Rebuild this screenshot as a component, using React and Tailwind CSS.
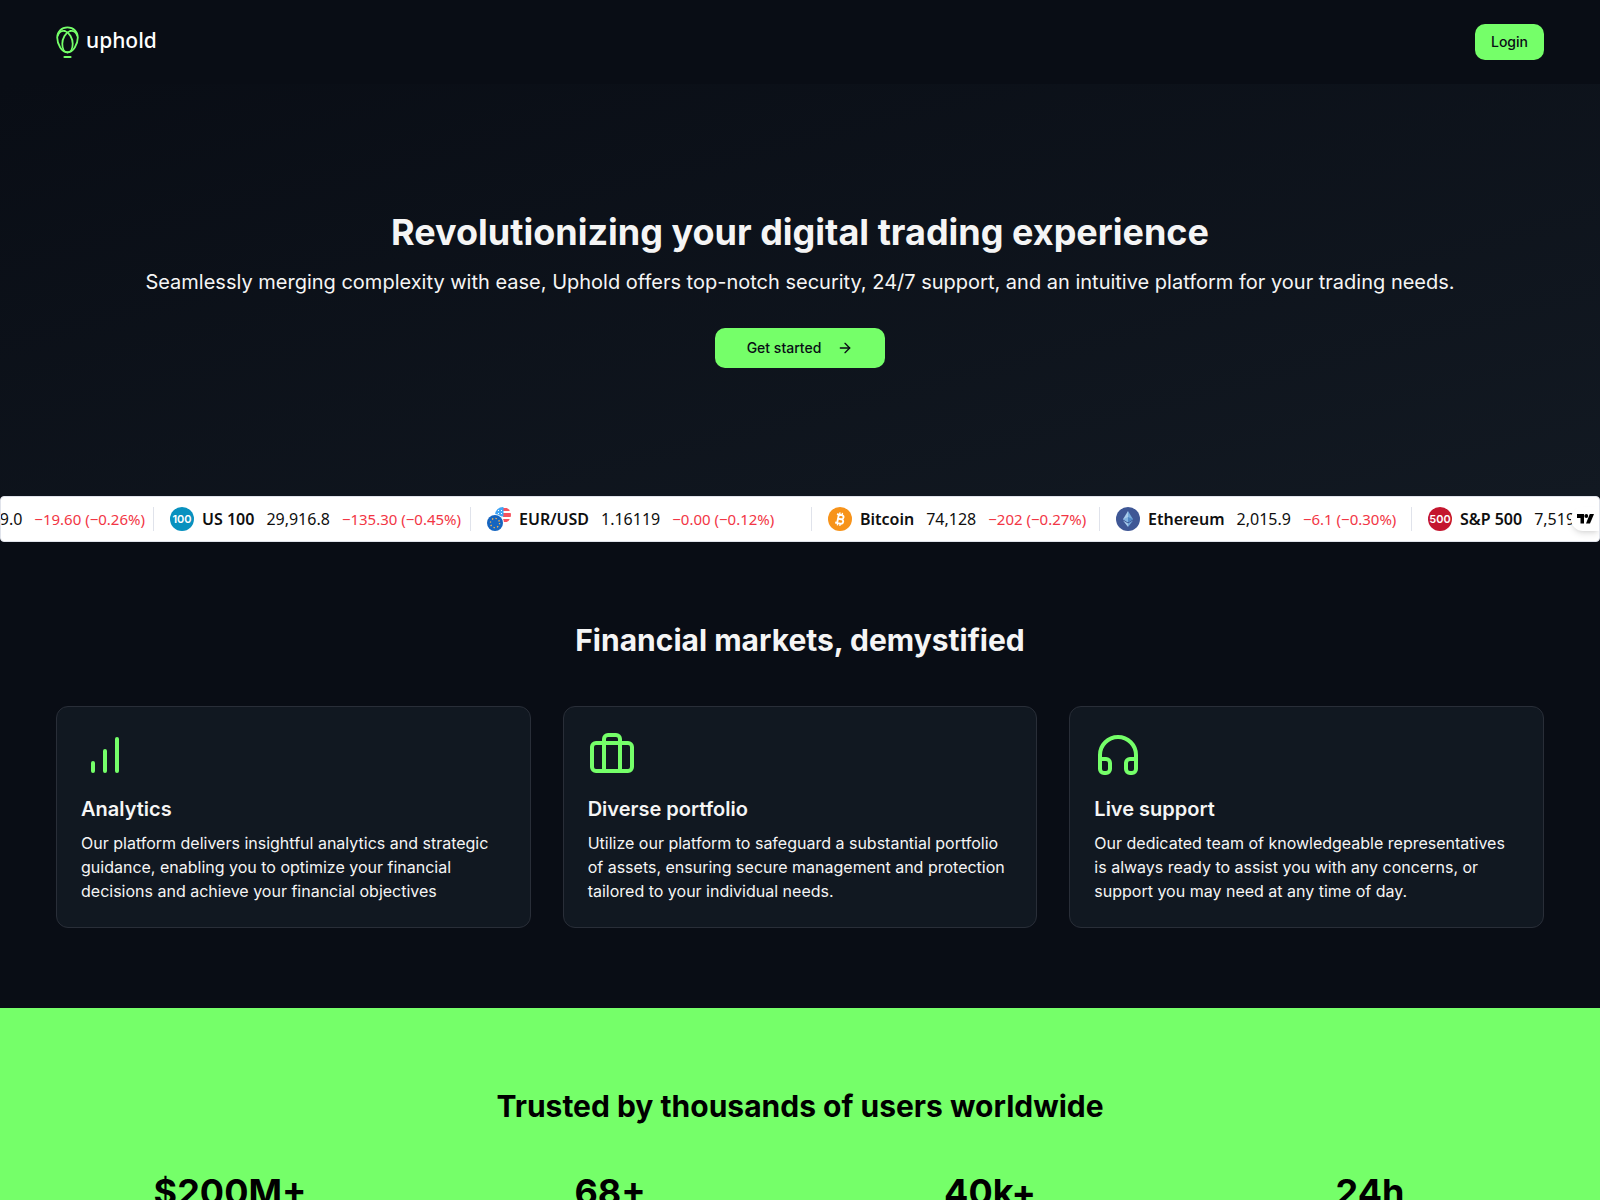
import { ArrowRight, Briefcase, Headphones } from "lucide-react";

function BalloonIcon() {
  return (
    <svg width="23" height="33" viewBox="0 0 23 33" fill="none" stroke="#75ff69" strokeWidth="1.8" strokeLinecap="round" aria-hidden="true">
      <path d="M11.500 1.300C5.300 1.300 1.200 5.800 1.200 11.600c0 6.400 4.600 14.800 10.300 14.800s10.300-8.400 10.300-14.800C21.800 5.800 17.700 1.300 11.500 1.300Z" />
      <path d="M1.800 9.500C3 6.200 6 4.300 9 5c4.500 1.500 7.700 7.500 7.700 12.700 0 4.900-2 8.700-5.200 8.700" />
      <path d="M21.200 9.500C20 6.200 17 4.300 14 5c-4.500 1.500-7.700 7.500-7.700 12.700 0 4.900 2 8.700 5.200 8.700" />
      <path d="M8.500 31h6" strokeWidth="2.200" />
    </svg>
  );
}

function BarsIcon() {
  return (
    <svg width="48" height="48" viewBox="0 0 24 24" fill="none" stroke="currentColor" strokeWidth="2" strokeLinecap="round" aria-hidden="true">
      <path d="M12 20V10M18 20V4M6 20v-4" />
    </svg>
  );
}

function NumberBadge({ value, color }) {
  return (
    <svg width="24" height="24" viewBox="0 0 24 24" className="shrink-0" aria-hidden="true">
      <circle cx="12" cy="12" r="12" fill={color} />
      <text x="12" y="16" textAnchor="middle" fontSize="11" fontWeight="600" fill="#fff" fontFamily="Inter, sans-serif">{value}</text>
    </svg>
  );
}

function EurUsdIcon() {
  return (
    <svg width="24" height="24" viewBox="0 0 24 24" className="shrink-0" aria-hidden="true">
      <defs>
        <clipPath id="usd"><circle cx="16" cy="8" r="8" /></clipPath>
      </defs>
      <g clipPath="url(#usd)">
        <rect x="8" width="16" height="16" fill="#fff" />
        <path d="M16 1h8v3h-8zM16 6h8v4h-8zM8 12h16v3H8z" fill="#f7525f" />
        <rect x="8" width="8.500" height="9.500" fill="#42a5f5" />
        <path d="M11 3h1v1h-1zM14 3h1v1h-1zM11 6h1v1h-1zM14 6h1v1h-1z" fill="#fff" />
      </g>
      <circle cx="8" cy="16" r="9" fill="#fff" />
      <circle cx="8" cy="16" r="8" fill="#1565c0" />
      <circle cx="8" cy="16" r="4.600" fill="none" stroke="#ffb74d" strokeWidth="1.300" strokeDasharray="1.300 2.310" />
    </svg>
  );
}

function BitcoinIcon() {
  return (
    <svg width="24" height="24" viewBox="0 0 24 24" className="shrink-0" aria-hidden="true">
      <circle cx="12" cy="12" r="12" fill="#f7931a" />
      <g transform="rotate(12 12 12)" fill="none" stroke="#fff" strokeWidth="1.900">
        <path d="M8 7.800h5a2.100 2.100 0 0 1 0 4.200h-3h3.500a2.200 2.200 0 0 1 0 4.400H8M10 7.800v8.600" />
        <path d="M10.700 5.500v2M13.200 5.500v2M10.700 16.500v2.200M13.200 16.500v2.200" strokeWidth="1.400" />
      </g>
    </svg>
  );
}

function EthereumIcon() {
  return (
    <svg width="24" height="24" viewBox="0 0 24 24" className="shrink-0" aria-hidden="true">
      <circle cx="12" cy="12" r="12" fill="#3f5795" />
      <path d="M12 4 7 12.300l5 3z" fill="#a9cdec" />
      <path d="m12 4 5 8.300-5 3z" fill="#77abdc" />
      <path d="m12 10-5 2.300 5 3z" fill="#81b2e0" />
      <path d="m12 10 5 2.300-5 3z" fill="#4e86c4" />
      <path d="m7 13.400 5 3V20z" fill="#a9cdec" />
      <path d="m17 13.400-5 3V20z" fill="#77abdc" />
    </svg>
  );
}

const quotes = [
  { name: "US 100", price: "29,916.8", change: "−135.30 (−0.45%)", width: "w-[317px]", icon: <NumberBadge value="100" color="#0891bf" /> },
  { name: "EUR/USD", price: "1.16119", change: "−0.00 (−0.12%)", width: "w-[341px]", icon: <EurUsdIcon /> },
  { name: "Bitcoin", price: "74,128", change: "−202 (−0.27%)", width: "w-[288px]", icon: <BitcoinIcon /> },
  { name: "Ethereum", price: "2,015.9", change: "−6.1 (−0.30%)", width: "w-[312px]", icon: <EthereumIcon /> },
  { name: "S&P 500", price: "7,519.0", change: "−19.60 (−0.26%)", width: "w-[317px]", icon: <NumberBadge value="500" color="#c4162e" /> },
];

const features = [
  { title: "Analytics", icon: <BarsIcon />, text: "Our platform delivers insightful analytics and strategic guidance, enabling you to optimize your financial decisions and achieve your financial objectives" },
  { title: "Diverse portfolio", icon: <Briefcase size={48} />, text: "Utilize our platform to safeguard a substantial portfolio of assets, ensuring secure management and protection tailored to your individual needs." },
  { title: "Live support", icon: <Headphones size={48} />, text: "Our dedicated team of knowledgeable representatives is always ready to assist you with any concerns, or support you may need at any time of day." },
];

const stats = ["$200M+", "68+", "40k+", "24h"];

function Ticker() {
  return (
    <section aria-label="Market prices" className="relative flex h-[46px] items-center overflow-hidden rounded-sm border border-[#e0e3eb] bg-white font-['Trebuchet_MS','Noto_Sans',sans-serif] text-base whitespace-nowrap text-[#0f0f0f]">
      <div className="flex w-[152px] shrink-0 items-center justify-end gap-3 pr-2">
        <span>7,519.0</span>
        <span className="text-[15px] text-[#f23645]">−19.60 (−0.26%)</span>
      </div>
      {quotes.map((q) => (
        <div key={q.name} className={`flex h-6 shrink-0 items-center border-l border-[#e0e3eb] pl-4 ${q.width}`}>
          {q.icon}
          <span className="ml-2 font-semibold">{q.name}</span>
          <span className="ml-3">{q.price}</span>
          <span className="ml-3 text-[15px] text-[#f23645]">{q.change}</span>
        </div>
      ))}
      <a href="#tradingview" aria-label="TradingView" className="absolute right-0 bottom-2.5 flex h-6 w-7 items-center justify-center rounded-l-xl bg-white pr-1 pl-1 shadow-md">
        <svg width="17" height="10" viewBox="0 0 17 10" fill="#000" className="shrink-0" aria-hidden="true">
          <path d="M0 0h7v9.500H3.500V4H0z" />
          <circle cx="9.300" cy="2" r="1.900" />
          <path d="M12.800 0H17l-4 9.500H9z" />
        </svg>
      </a>
    </section>
  );
}

export default function App() {
  return (
    <div className="min-h-screen bg-[#090d15] font-[Inter,sans-serif] text-[#f5f5f5]">
      <header className="flex h-21 items-center justify-between px-14">
        <a href="#home" className="flex items-start gap-[7px] text-white">
          <BalloonIcon />
          <span className="font-['Noto_Sans',sans-serif] text-[21px] leading-7 font-medium">uphold</span>
        </a>
        <button type="button" className="h-9 rounded-[10px] bg-[#75ff69] px-4 text-sm font-medium text-[#090d15]">Login</button>
      </header>
      <main>
        <section className="flex flex-col items-center bg-linear-to-br from-[#090d15] to-[#121922] px-14 py-32 text-center">
          <h1 className="text-4xl font-bold">Revolutionizing your digital trading experience</h1>
          <p className="mt-4 text-xl">Seamlessly merging complexity with ease, Uphold offers top-notch security, 24/7 support, and an intuitive platform for your trading needs.</p>
          <button type="button" className="mt-8 flex h-10 items-center gap-4 rounded-[10px] bg-[#75ff69] px-8 text-sm font-medium text-[#090d15]">
            Get started
            <ArrowRight size={16} />
          </button>
        </section>
        <Ticker />
        <section className="px-14 py-20">
          <h2 className="text-center text-3xl font-bold">Financial markets, demystified</h2>
          <div className="mt-12 grid grid-cols-3 gap-8">
            {features.map((f) => (
              <article key={f.title} className="rounded-xl border border-[#292e38] bg-[#111821] p-6">
                <div className="text-[#75ff69]">{f.icon}</div>
                <h3 className="mt-4 text-xl font-semibold">{f.title}</h3>
                <p className="mt-2">{f.text}</p>
              </article>
            ))}
          </div>
        </section>
        <section className="bg-[#75ff69] px-14 py-20 text-center text-black">
          <h2 className="text-3xl font-bold">Trusted by thousands of users worldwide</h2>
          <div className="mt-12 grid grid-cols-4 gap-8 text-4xl font-bold">
            {stats.map((s) => (
              <p key={s}>{s}</p>
            ))}
          </div>
        </section>
      </main>
    </div>
  );
}
